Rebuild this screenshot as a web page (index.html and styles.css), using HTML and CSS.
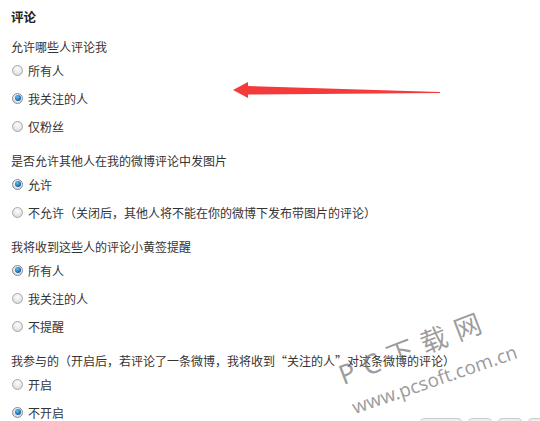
FILE: index.html
```html
<!DOCTYPE html>
<html lang="zh-CN">
<head>
<meta charset="utf-8">
<link rel="stylesheet" href="styles.css">
</head>
<body>
<div class="page">
  <div class="title">评论</div>

  <div class="section">
    <div class="label">允许哪些人评论我</div>
    <div class="opt"><span class="radio"></span>所有人</div>
    <div class="opt"><span class="radio on"></span>我关注的人</div>
    <div class="opt"><span class="radio"></span>仅粉丝</div>
  </div>

  <div class="section">
    <div class="label">是否允许其他人在我的微博评论中发图片</div>
    <div class="opt"><span class="radio on"></span>允许</div>
    <div class="opt"><span class="radio"></span>不允许（关闭后，其他人将不能在你的微博下发布带图片的评论）</div>
  </div>

  <div class="section">
    <div class="label">我将收到这些人的评论小黄签提醒</div>
    <div class="opt"><span class="radio on"></span>所有人</div>
    <div class="opt"><span class="radio"></span>我关注的人</div>
    <div class="opt"><span class="radio"></span>不提醒</div>
  </div>

  <div class="section">
    <div class="label">我参与的（开启后，若评论了一条微博，我将收到“关注的人”对这条微博的评论）</div>
    <div class="opt"><span class="radio"></span>开启</div>
    <div class="opt"><span class="radio on"></span>不开启</div>
  </div>

  <svg class="arrow" width="540" height="421" viewBox="0 0 540 421">
    <polygon points="233,90 248,82 248,86 440,92 440,93 248,94.5 248,98" fill="#f43a3a"/>
  </svg>

  <div class="wm wm-big">P C 下 载 网</div>
  <div class="wm wm-url">www.pcsoft.com.cn</div>
  <div class="wm-boxes"><span></span><span></span><span></span><span></span></div>
</div>
</body>
</html>
```

FILE: styles.css
```css
html, body {
  margin: 0;
  padding: 0;
  background: #fff;
}
.page {
  position: relative;
  width: 540px;
  height: 421px;
  overflow: hidden;
  box-sizing: border-box;
  padding: 8px 0 0 11px;
  font-family: "Noto Sans CJK SC", "Microsoft YaHei", sans-serif;
  font-size: 12px;
  color: #333;
  display: flex;
  flex-direction: column;
  gap: 12px;
}
.title {
  height: 18px;
  line-height: 18px;
  font-weight: bold;
  color: #222;
  font-size: 12.5px;
}
.section {
  display: flex;
  flex-direction: column;
}
.label {
  height: 18px;
  line-height: 18px;
  white-space: nowrap;
}
.opt {
  height: 28px;
  display: flex;
  align-items: center;
  white-space: nowrap;
}
.radio {
  width: 11px;
  height: 11px;
  border-radius: 50%;
  box-sizing: border-box;
  border: 1px solid #a9a9a9;
  background: radial-gradient(circle at 50% 35%, #ffffff 0%, #e4e4e4 60%, #cfcfcf 100%);
  margin: 0 5px 0 1px;
  position: relative;
  flex: none;
}
.radio.on {
  border-color: #7a8c9c;
}
.radio.on::after {
  content: "";
  position: absolute;
  left: 1.5px;
  top: 1.5px;
  width: 6px;
  height: 6px;
  border-radius: 50%;
  background: radial-gradient(circle at 40% 35%, #6fc0f0 0%, #1a72b8 55%, #0b3f73 100%);
}
.arrow {
  position: absolute;
  left: 0;
  top: 0;
  pointer-events: none;
}
.wm {
  position: absolute;
  color: rgba(120, 120, 120, 0.72);
  font-family: "Noto Sans", "Noto Sans CJK SC", sans-serif;
  white-space: nowrap;
  transform-origin: 0 100%;
}
.wm-big {
  left: 345px;
  top: 360px;
  font-size: 27px;
  line-height: 30px;
  letter-spacing: 1px;
  transform: rotate(-21deg);
}
.wm-url {
  left: 356px;
  top: 396px;
  font-size: 19px;
  line-height: 22px;
  transform: rotate(-19deg);
}
.wm-boxes {
  position: absolute;
  left: 420px;
  top: 418px;
  display: flex;
  gap: 6px;
}
.wm-boxes span {
  width: 22px;
  height: 6px;
  border: 1px solid #ccc;
  border-radius: 4px 4px 0 0;
  background: #eee;
}
.wm-boxes span:first-child {
  width: 40px;
}
```
